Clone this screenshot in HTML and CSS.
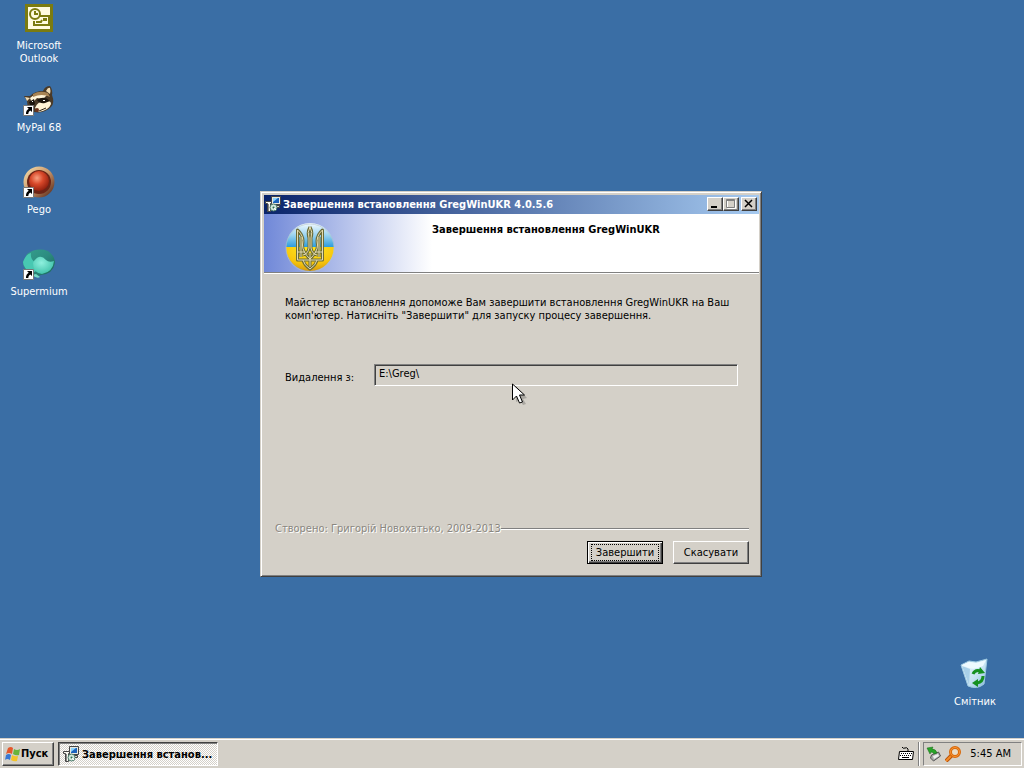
FILE: index.html
```html
<!DOCTYPE html>
<html lang="uk">
<head>
<meta charset="utf-8">
<title>Завершення встановлення GregWinUKR 4.0.5.6</title>
<link rel="stylesheet" href="styles.css">
</head>
<body>
<svg class="defs" aria-hidden="true">
  <defs>
    <linearGradient id="paper" x1="0" y1="0" x2="1" y2="1"><stop offset="0" stop-color="#f4fcff"/><stop offset=".6" stop-color="#c4e2f2"/><stop offset="1" stop-color="#7fb4d8"/></linearGradient>
    <radialGradient id="redball" cx=".4" cy=".35" r=".7"><stop offset="0" stop-color="#f8a080"/><stop offset=".45" stop-color="#d8482a"/><stop offset="1" stop-color="#8a1c0c"/></radialGradient>
    <linearGradient id="ring" x1="0" y1="0" x2="1" y2="1"><stop offset="0" stop-color="#f8e4b0"/><stop offset=".5" stop-color="#c89468"/><stop offset="1" stop-color="#4a1c10"/></linearGradient>
    <linearGradient id="teal" x1="0" y1="0" x2="1" y2="1"><stop offset="0" stop-color="#36a08e"/><stop offset=".5" stop-color="#2c8c80"/><stop offset="1" stop-color="#176152"/></linearGradient>
    <radialGradient id="aqua" cx=".4" cy=".35" r=".7"><stop offset="0" stop-color="#8ff0de"/><stop offset="1" stop-color="#3cc0a8"/></radialGradient>
    <linearGradient id="sky" x1="0" y1="0" x2="0" y2="1"><stop offset="0" stop-color="#f4fbff"/><stop offset=".5" stop-color="#9cd4f0"/><stop offset="1" stop-color="#2c9cdc"/></linearGradient>
    <radialGradient id="wheat" cx=".5" cy=".1" r="1"><stop offset="0" stop-color="#ffe820"/><stop offset=".6" stop-color="#f6c40c"/><stop offset="1" stop-color="#c98c10"/></radialGradient>
    <symbol id="shortcut" viewBox="0 0 11 11"><path fill="#fff" stroke="#777" d="M.5.5h10v10H.5z"/><path d="M4 2h5v5L7.300 5.400C5.800 6.300 5.400 7.400 5.300 9H3C2.900 6.600 3.900 4.900 5.700 3.800z"/></symbol>
    <symbol id="setup" viewBox="0 0 16 16">
      <path fill="#e8e8e0" stroke="#444" d="M6.500.500h9v8h-9z"/><path fill="#1c62bc" d="M8 2h6v5H8z"/><path fill="#8cd4fc" d="M8 2h5L8 6z"/><path fill="#d8d8d0" stroke="#444" d="M9.500 9.500h5v2h-5z"/>
      <path fill="#f8f8f0" stroke="#444" d="M.500 5.500h6v2h-1v8h-3v-8h-2z"/><path stroke="#888" d="M3.500 8v7"/>
      <circle cx="8.500" cy="11.500" r="3.500" fill="#d4e8dc" stroke="#487868"/><circle cx="8.500" cy="11.500" r="1" fill="#28684c"/><path stroke="#fff" d="m9 12 2 2"/>
    </symbol>
  </defs>
</svg>
<main class="desktop">
  <nav class="shortcuts">
    <a class="shortcut" href="#outlook">
      <svg class="icon" viewBox="0 0 32 32"><path fill="#7b7b10" d="M2 2h28v28H2z"/><path fill="#fffbe0" d="M5 5h22v22H5z"/><g fill="none" stroke="#7b7b10" stroke-width="2"><path d="M17 14h9v9H11v-4"/><path d="m13 20 5 0 1-2"/><circle cx="12" cy="12" r="5" fill="#fffbe0"/><path d="M12 9v3h3"/></g><path fill="#7b7b10" d="M20 16h4v3h-4z"/></svg>
      <span>Microsoft<br>Outlook</span>
    </a>
    <a class="shortcut" href="#mypal">
      <svg class="icon" viewBox="0 0 32 32"><path fill="#4a3a28" d="M20 7q2-5 7-5 3 4 2 9 3 8-1 12-7 7-17 5-7-3-7-11l-3-5 6 0q5-5 13-5z"/><path fill="#f0dcb4" d="M23 7q2-4 4-3 1 3 0 6zM2 13l5 1-3 3z"/><path fill="#fff4d8" d="M7 14q8-7 17-3l-4 4-6-1-5 5zM12 24q2-6 9-7 7-1 7 3-2 6-12 8z"/><path fill="#1b150e" d="M14 16q7-5 13 1l-5 2q-5 1-8-3zM6 18l5-3 1 5-4 3z"/><path fill="#a88454" d="M10 10q7-4 15-1l2 4q-8-4-17 0z"/><path fill="#fff" d="M20 16h2v1h-2zM9 17h1v1H9z"/><circle cx="14" cy="26" r="2" fill="#6e3420"/><path stroke="#2b2015" d="m16 27 7-3"/><use href="#shortcut" y="21" width="11" height="11"/></svg>
      <span>MyPal 68</span>
    </a>
    <a class="shortcut" href="#pego">
      <svg class="icon" viewBox="0 0 32 32"><circle cx="16" cy="16" r="15.500" fill="url(#ring)"/><circle cx="16" cy="16" r="12" fill="#6c2416"/><circle cx="16" cy="15" r="10" fill="url(#redball)"/><use href="#shortcut" y="21" width="11" height="11"/></svg>
      <span>Pego</span>
    </a>
    <a class="shortcut" href="#supermium">
      <svg class="icon" viewBox="0 0 32 32"><path fill="url(#teal)" d="M4 6Q14-1 25 3q7 5 7 12-2 11-14 12-6 3-10 1-8-7-8-14z"/><path fill="#48c8b2" d="M0 14q3-8 8-9-1 6 4 9l1 9-5 3q-8-7-8-12z"/><path fill="url(#aqua)" d="M11 13q6-8 12-1 3 3 8 1-1 11-12 13-9-1-9-11z"/><path fill="#75d8c5" d="M9 27q5 4 8 2l-4-3z"/><use href="#shortcut" y="21" width="11" height="11"/></svg>
      <span>Supermium</span>
    </a>
  </nav>
  <a class="shortcut bin" href="#bin">
    <svg class="icon" viewBox="0 0 32 32"><path fill="url(#paper)" stroke="#9cc8e0" d="m2 7 8-4 7 1 11-3-3 25q-7 6-16 2z"/><path fill="#eefaff" d="m3 7 7-3 7 1 10-3-3 6q-8 4-14 2z"/><path fill="#a8d0e8" d="m3 8 8 3-1 16z"/><g fill="none" stroke="#159020" stroke-width="3"><path d="M14 16q2-5 8-3M24 18q0 6-6 7"/></g><path fill="#159020" d="m21 9 5 6-7 1zM19 21v8l-6-4z"/></svg>
    <span>Смітник</span>
  </a>

  <section class="window" aria-labelledby="caption">
    <header class="titlebar">
      <svg class="small-icon" viewBox="0 0 16 16"><use href="#setup"/></svg>
      <h1 class="caption" id="caption">Завершення встановлення GregWinUKR 4.0.5.6</h1>
      <div class="controls">
        <button class="control" aria-label="Згорнути"><svg viewBox="0 0 12 10"><path d="M2 7h6v2H2z"/></svg></button>
        <button class="control" aria-label="Розгорнути" disabled><svg viewBox="0 0 12 10"><path fill="none" stroke="#fff" d="M2.500 1.500h8v8h-8z"/><path fill="none" stroke="#808080" d="M1.500.500h8v8h-8zM1 1.500h9"/></svg></button>
        <button class="control close" aria-label="Закрити"><svg viewBox="0 0 12 10"><path fill="none" stroke="#000" stroke-width="1.500" d="m2 1 7 7M9 1 2 8"/></svg></button>
      </div>
    </header>
    <div class="banner">
      <svg class="emblem" viewBox="0 0 50 50">
        <path fill="url(#sky)" d="M1 24a24 24 0 0 1 48 0z"/><path fill="url(#wheat)" d="M1 24h48a24 24 0 0 1-48 0z"/><circle cx="25" cy="25" r="24" fill="none" stroke="#b8c4c8" opacity=".6"/>
        <g fill="none" stroke="#6c6c38" stroke-width="3" stroke-linejoin="round"><path id="trident" d="M12.500 7v30h25V7q-7 6-5 15 0 7-7.500 14-7.500-7-7.500-14 2-9-5-15zM25 4q-3 5-1 11v10q-1 6-6 7M25 4q3 5 1 11v10q1 6 6 7M18 37q1 5 7 9 6-4 7-9M25 30v14M13 29h7M30 29h7M16 14v20M34 14v20"/></g>
        <use href="#trident" fill="none" stroke="#e4dcb0"/>
      </svg>
      <h2 class="heading">Завершення встановлення GregWinUKR</h2>
    </div>
    <form class="body">
      <p class="intro">Майстер встановлення допоможе Вам завершити встановлення GregWinUKR на Ваш комп'ютер. Натисніть "Завершити" для запуску процесу завершення.</p>
      <div class="field">
        <label for="path">Видалення з:</label>
        <input class="path" id="path" type="text" value="E:\Greg\" readonly>
      </div>
      <div class="credit"><span>Створено: Григорій Новохатько, 2009-2013</span></div>
      <div class="actions">
        <button class="button default" type="button"><span>Завершити</span></button>
        <button class="button" type="button"><span>Скасувати</span></button>
      </div>
    </form>
  </section>
  <svg class="pointer" viewBox="0 0 16 22" aria-hidden="true"><path fill="#444" opacity=".3" d="m4 3 11 12-4 1 3 5-3 1-3-5-4 2z"/><path fill="#fff" stroke="#000" d="M.500 1v16l4-4 3 7 3-1-3-7h5z"/></svg>
</main>
<footer class="taskbar">
  <button class="start">
    <svg class="flag" viewBox="0 0 16 16"><path fill="#e4582c" d="M3 2q3-2 5 0L7 8Q4 6 1 8z"/><path fill="#68b43c" d="M9 3q3 2 6 0l-1 6q-3 1-6-1z"/><path fill="#3878d4" d="M1 9q3-2 5 0l-1 5q-3-2-5 0z"/><path fill="#f4c428" d="M7 9q3 2 6 1l-1 5q-3 1-6-1z"/></svg>
    <span>Пуск</span>
  </button>
  <button class="task"><svg class="small-icon" viewBox="0 0 16 16"><use href="#setup"/></svg><span class="task-name">Завершення встанов...</span></button>
  <div class="language"><svg class="small-icon" viewBox="0 0 16 16"><path fill="none" stroke="#000" d="M4 1q1 2 3 1t3 1v2"/><path fill="#fff" stroke="#000" d="M1.500 5.500h14l-1 8H.500z"/><path stroke="#000" stroke-dasharray="1 1" d="M3 7.500h11M2 9.500h11"/><path stroke="#000" d="M4 11.500h7"/></svg></div>
  <div class="tray">
    <svg class="small-icon" viewBox="0 0 16 16"><path fill="#aaa" stroke="#555" d="m5.500 9 7-3 2 4-7 5-3-3z"/><path fill="#eee" d="m7 10 5-2 1 2-5 3z"/><path fill="#28a428" stroke="#146814" stroke-width=".5" d="m1 2 6-1-1 2q4 0 5 4L8 8Q7 6 5 6L4 8z"/></svg>
    <svg class="small-icon" viewBox="0 0 16 16"><path stroke="#b85008" stroke-width="4" d="m7 9-6 6"/><path stroke="#f48c28" stroke-width="2" d="m7 9-6 6"/><circle cx="10" cy="6" r="4.500" fill="#e8dcc8" stroke="#d86808" stroke-width="3"/><circle cx="10" cy="6" r="4.500" fill="none" stroke="#f89438"/></svg>
    <time class="clock">5:45 AM</time>
  </div>
</footer>
</body>
</html>
```
FILE: styles.css
```css
* { box-sizing: border-box; }
html, body { height: 100%; }
body {
  margin: 0;
  display: flex;
  flex-direction: column;
  overflow: hidden;
  background: #3a6ea5;
  color: #000;
  font: 11px/13px Tahoma, "DejaVu Sans Condensed", "DejaVu Sans", sans-serif;
}
h1, h2, p { margin: 0; font-size: inherit; }
button, input { font: inherit; color: inherit; border-radius: 0; }
.defs { position: absolute; width: 0; height: 0; }
svg { display: block; flex: none; }

.desktop { position: relative; flex: 1; }
.shortcuts { display: flex; flex-direction: column; width: 78px; padding-top: 2px; }
.shortcut {
  display: flex;
  flex-direction: column;
  align-items: center;
  gap: 5px;
  min-height: 82px;
  color: #fff;
  text-align: center;
  text-decoration: none;
}
.icon { width: 32px; height: 32px; }
.bin { position: absolute; right: 11px; bottom: 0; width: 76px; min-height: 80px; }

.window {
  position: absolute;
  left: 260px;
  top: 191px;
  width: 502px;
  padding: 2px;
  background: #d4d0c8;
  border: 1px solid;
  border-color: #d4d0c8 #404040 #404040 #d4d0c8;
  box-shadow: inset 1px 1px #fff, inset -1px -1px #808080;
}
.titlebar {
  display: flex;
  align-items: center;
  gap: 2px;
  height: 19px;
  margin: 1px 0 0 1px;
  padding: 0 2px 1px 1px;
  background: linear-gradient(90deg, #0a246a, #a6caf0);
}
.small-icon { width: 16px; height: 16px; }
.caption, .heading, .start, .task { font-weight: bold; }
.caption { flex: 1; color: #fff; white-space: nowrap; }
.controls { display: flex; }
.control {
  display: grid;
  place-items: center;
  width: 16px;
  height: 14px;
  padding: 0;
  background: #d4d0c8;
  border: 1px solid;
  border-color: #fff #404040 #404040 #fff;
  box-shadow: inset -1px -1px #808080;
}
.control svg { width: 12px; height: 10px; }
.close { margin-left: 2px; }
.banner {
  display: flex;
  align-items: flex-start;
  gap: 97px;
  height: 59px;
  margin: 0 0 0 1px;
  padding: 9px 21px 0;
  background: linear-gradient(90deg, #7088d8, #fff 168px);
  border-bottom: 1px solid #808080;
  box-shadow: 0 1px #fff;
}
.emblem { width: 50px; height: 50px; }
.heading { white-space: nowrap; }
.body { padding: 23px 10px 10px 12px; }
.intro { width: 450px; margin-left: 10px; }
.field { display: flex; align-items: center; gap: 12px; margin: 42px 11px 0 10px; }
.field label { width: 77px; padding-top: 4px; }
.path {
  flex: 1;
  height: 22px;
  padding: 0 4px 3px;
  outline: 0;
  background: #d4d0c8;
  border: 1px solid;
  border-color: #808080 #fff #fff #808080;
  box-shadow: inset 1px 1px #404040;
}
.credit {
  display: flex;
  align-items: center;
  margin: 136px 0 6px;
  color: #8a8780;
  text-shadow: 1px 1px #fff;
}
.credit::after { content: ""; flex: 1; border-top: 1px solid #808080; border-bottom: 1px solid #fff; }
.actions { display: flex; justify-content: flex-end; gap: 10px; }
.button {
  width: 76px;
  height: 23px;
  padding: 2px;
  background: #d4d0c8;
  border: 1px solid;
  border-color: #fff #404040 #404040 #fff;
  box-shadow: inset -1px -1px #808080;
}
.button span { display: block; padding: 2px 0; }
.default { border-color: #000; box-shadow: inset 1px 1px #fff, inset -1px -1px #404040, inset -2px -2px #808080; }
.default span { margin: 0 1px; padding: 1px 0; border: 1px dotted #000; }
.pointer { position: absolute; left: 512px; top: 383px; width: 16px; height: 22px; }

.taskbar {
  display: flex;
  align-items: center;
  gap: 4px;
  height: 30px;
  padding: 0 2px;
  background: #d4d0c8;
  border-top: 1px solid #d4d0c8;
  box-shadow: inset 0 1px #fff;
}
.start, .task {
  display: flex;
  align-items: center;
  height: 24px;
  padding: 1px 2px;
  border: 1px solid;
}
.start {
  width: 52px;
  background: #d4d0c8;
  border-color: #fff #404040 #404040 #fff;
  box-shadow: inset -1px -1px #808080;
}
.flag { width: 16px; height: 16px; }
.task {
  width: 160px;
  gap: 3px;
  padding: 1px 0 0 4px;
  background: repeating-conic-gradient(#fff 0 25%, #d4d0c8 0 50%) 0 0 / 2px 2px;
  border-color: #404040 #fff #fff #404040;
  box-shadow: inset 1px 1px #808080;
}
.task-name { white-space: nowrap; }
.language { margin-left: auto; padding: 0 4px; border-right: 1px solid #808080; box-shadow: 1px 0 #fff; }
.tray {
  display: flex;
  align-items: center;
  gap: 3px;
  height: 24px;
  padding: 0 10px 0 2px;
  border: 1px solid;
  border-color: #808080 #fff #fff #808080;
}
.language { display: flex; align-items: center; height: 24px; }
.clock { margin-left: 6px; }
```
